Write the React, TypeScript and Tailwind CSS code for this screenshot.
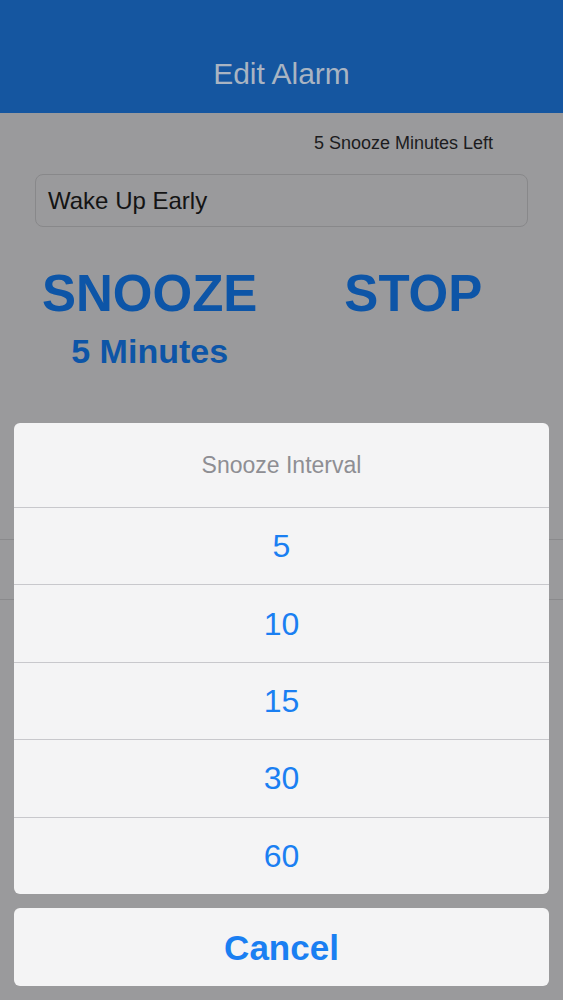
import React from "react";

const intervals = [5, 10, 15, 30, 60];

export default function App() {
  return (
    <div
      className="relative h-[1000px] w-full overflow-hidden bg-[#9a9a9c]"
      style={{ fontFamily: '"Liberation Sans", Arial, sans-serif' }}
    >
      {/* dimmed page behind the sheet */}
      <div className="flex h-[113px] items-end justify-center bg-[#1556a0] pb-[24px]">
        <span className="text-[30px] leading-none text-[#a9b4c2]">Edit Alarm</span>
      </div>

      <p className="mt-[20px] pr-[70px] text-right text-[18px] leading-[21px] text-[#1c1c1e]">
        5 Snooze Minutes Left
      </p>

      <div className="mx-[35px] mt-[20px] flex h-[53px] items-center rounded-[8px] border border-[#88888a] px-[12px]">
        <span className="text-[24px] leading-none text-[#141414]">Wake Up Early</span>
      </div>

      <div className="mt-[41px] flex items-start pl-[42px]">
        <div className="flex flex-col items-center">
          <span className="text-[51px] font-bold leading-none text-[#0d55a7]">SNOOZE</span>
          <span className="mt-[15px] text-[34px] font-bold leading-none text-[#0d55a7]">5 Minutes</span>
        </div>
        <span className="ml-[87px] text-[51px] font-bold leading-none text-[#0d55a7]">STOP</span>
      </div>

      <div className="mt-[171px] h-[61px] border-y border-[#8a8a8c]" />

      {/* action sheet */}
      <div className="absolute inset-x-[14px] bottom-[14px] flex flex-col gap-[14px]">
        <div className="overflow-hidden rounded-[6px] bg-[#f4f4f5]">
          <div className="flex h-[84px] items-center justify-center">
            <span className="text-[23px] text-[#8e8e93]">Snooze Interval</span>
          </div>
          {intervals.map((n) => (
            <div
              key={n}
              className="flex h-[77.4px] items-center justify-center border-t border-[#c8c8cc]"
            >
              <span className="text-[32px] leading-none text-[#1a7ff2]">{n}</span>
            </div>
          ))}
        </div>
        <div className="flex h-[78px] items-center justify-center rounded-[6px] bg-[#f4f4f5]">
          <span className="text-[35px] font-bold leading-none text-[#1a7ff2]">Cancel</span>
        </div>
      </div>
    </div>
  );
}
